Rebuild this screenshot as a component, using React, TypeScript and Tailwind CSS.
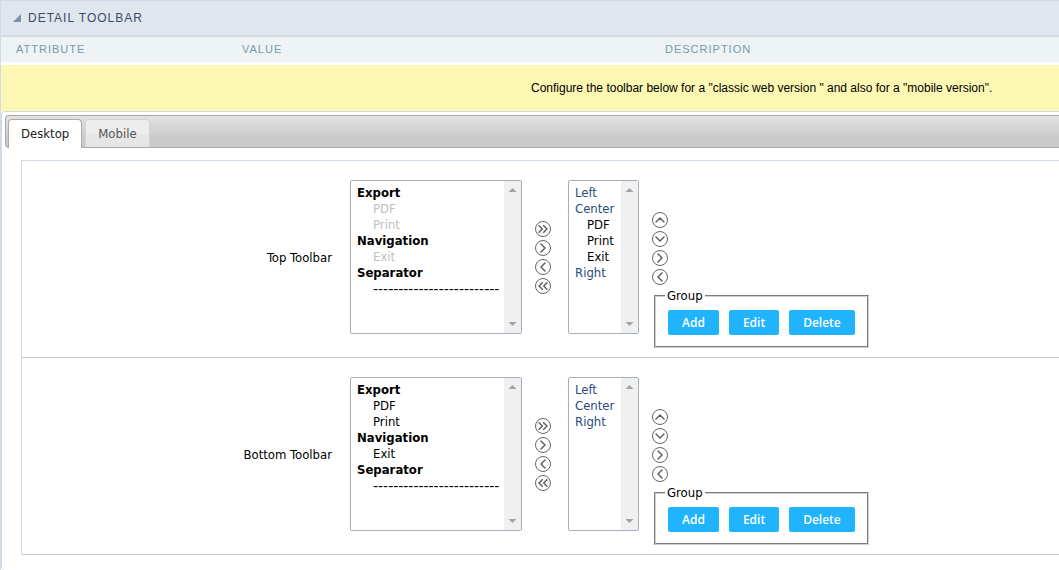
import { ChevronDown, ChevronLeft, ChevronRight, ChevronUp, ChevronsLeft, ChevronsRight, type LucideIcon } from "lucide-react";

type Item = { text: string; kind: "heading" | "disabled" | "item" | "region" | "button" | "divider" };
type Action = { label: string; icon: LucideIcon };

const DIVIDER = "-------------------------";

const optionStyle = {
  heading: "h-4 p-0 leading-4 font-bold text-black",
  disabled: "h-4 p-0 pl-4 leading-4 text-[#c0c0c0]",
  item: "h-4 p-0 pl-4 leading-4 text-black",
  divider: "h-4 p-0 pl-4 font-['DejaVu_Sans',sans-serif] text-[14px] leading-4 text-black",
  region: "h-4 p-0 leading-4 text-[#2b4a7a]",
  button: "h-4 p-0 pl-3 leading-4 text-black",
};

const moveActions: Action[] = [
  { label: "Add all", icon: ChevronsRight },
  { label: "Add selected", icon: ChevronRight },
  { label: "Remove selected", icon: ChevronLeft },
  { label: "Remove all", icon: ChevronsLeft },
];

const orderActions: Action[] = [
  { label: "Move up", icon: ChevronUp },
  { label: "Move down", icon: ChevronDown },
  { label: "Move right", icon: ChevronRight },
  { label: "Move left", icon: ChevronLeft },
];

function available(used: boolean): Item[] {
  const kind = used ? "disabled" : "item";
  return [
    { text: "Export", kind: "heading" },
    { text: "PDF", kind },
    { text: "Print", kind },
    { text: "Navigation", kind: "heading" },
    { text: "Exit", kind },
    { text: "Separator", kind: "heading" },
    { text: DIVIDER, kind: "divider" },
  ];
}

const topSelected: Item[] = [
  { text: "Left", kind: "region" },
  { text: "Center", kind: "region" },
  { text: "PDF", kind: "button" },
  { text: "Print", kind: "button" },
  { text: "Exit", kind: "button" },
  { text: "Right", kind: "region" },
];

const bottomSelected: Item[] = [
  { text: "Left", kind: "region" },
  { text: "Center", kind: "region" },
  { text: "Right", kind: "region" },
];

function ListBox({ id, label, items, width }: { id: string; label?: string; items: Item[]; width: string }) {
  return (
    <div className={`flex h-[154px] shrink-0 rounded-[2px] border border-[#a3afbf] bg-white ${width}`}>
      <select
        id={id}
        multiple
        aria-label={label}
        className="h-full min-w-0 flex-1 appearance-none overflow-hidden bg-transparent py-1 pl-[6px] text-[13px] outline-none"
      >
        {items.map((item) => (
          <option key={item.text} disabled={item.kind === "disabled"} className={optionStyle[item.kind]}>
            {item.text}
          </option>
        ))}
      </select>
      <div aria-hidden="true" className="flex w-[17px] flex-col items-center justify-between bg-[#f0f0f0] py-[7px]">
        <svg width="9" height="4" viewBox="0 0 9 4" fill="#a3a3a3"><path d="M.5 4 4.5 0 8.5 4z" /></svg>
        <svg width="9" height="4" viewBox="0 0 9 4" fill="#a3a3a3"><path d="M.5 0 4.5 4 8.5 0z" /></svg>
      </div>
    </div>
  );
}

function ActionColumn({ actions }: { actions: Action[] }) {
  return (
    <div className="flex flex-col gap-[3px]">
      {actions.map(({ label, icon: Icon }) => (
        <button
          key={label}
          type="button"
          aria-label={label}
          className="flex size-4 items-center justify-center rounded-full border border-[#666] bg-white text-[#606060]"
        >
          <Icon size={16} strokeWidth={2.25} className="shrink-0" />
        </button>
      ))}
    </div>
  );
}

function ToolbarRow({ id, label, source, selected }: { id: string; label: string; source: Item[]; selected: Item[] }) {
  return (
    <div className="flex items-start border-b border-[#c8c8c8] pt-[19px] pb-[9px]">
      <label htmlFor={id} className="w-[310px] shrink-0 pt-[70px] text-right leading-4">
        {label}
      </label>
      <div className="ml-[18px] flex">
        <ListBox id={id} items={source} width="w-[172px]" />
        <div className="mx-[13px] pt-[41px]">
          <ActionColumn actions={moveActions} />
        </div>
        <div className="ml-1">
          <ListBox id={`${id}-selected`} label={`${label} buttons in use`} items={selected} width="w-[71px]" />
        </div>
      </div>
      <div className="ml-[13px] pt-8">
        <ActionColumn actions={orderActions} />
        <fieldset className="mt-[3px] ml-[2px] border-2 border-[#d0d0d0] px-3 pb-[11px] [border-style:groove]">
          <legend className="-ml-[3px] px-[2px] leading-4">Group</legend>
          <div className="mt-[6px] flex gap-[10px] font-['Open_Sans',sans-serif] text-xs font-semibold text-white">
            <button type="button" className="h-[25px] rounded-[2px] bg-[#20b4ff] px-[14px]">Add</button>
            <button type="button" className="h-[25px] rounded-[2px] bg-[#20b4ff] px-[14px]">Edit</button>
            <button type="button" className="h-[25px] rounded-[2px] bg-[#20b4ff] px-[14px]">Delete</button>
          </div>
        </fieldset>
      </div>
    </div>
  );
}

export default function App() {
  return (
    <main className="min-h-screen overflow-hidden border-t border-l border-[#d0dbe3] bg-white font-['DejaVu_Sans_Condensed','Noto_Sans',sans-serif] text-[13px] text-black">
      <header className="flex h-9 items-center gap-[7px] border-b-2 border-[#d0dbe3] bg-[#dfe6ee] pl-3 font-['Liberation_Sans',sans-serif]">
        <svg width="8" height="8" viewBox="0 0 8 8" fill="#8291a8" aria-hidden="true"><path d="M8 0v8H0z" /></svg>
        <h1 className="text-xs tracking-[1px] text-[#3e4a63]">DETAIL TOOLBAR</h1>
      </header>
      <div className="grid h-[25px] grid-cols-[226px_423px_1fr] items-center bg-[#eef3f6] pl-[15px] font-['Liberation_Sans',sans-serif] text-[11px] tracking-[1px] text-[#7799a8]">
        <span>ATTRIBUTE</span>
        <span>VALUE</span>
        <span>DESCRIPTION</span>
      </div>
      <p className="mt-[3px] flex h-[46px] items-center bg-[#fcf8b3] pl-[530px] font-['Liberation_Sans',sans-serif] text-xs whitespace-nowrap">
        Configure the toolbar below for a "classic web version " and also for a "mobile version".
      </p>
      <section className="rounded-l-[4px] border-t border-l border-[#d0dbe3] pt-[3px] pb-[15px] pl-[3px]">
        <div role="tablist" className="flex h-[33px] items-end gap-[3px] rounded-l-[4px] border-y border-l border-[#aaa] bg-linear-to-b from-[#e3e3e3] to-[#cacaca] to-70% pl-[2px]">
          <button type="button" role="tab" aria-selected="true" className="-mb-px h-[29px] rounded-t-[4px] border border-b-0 border-[#aaa] bg-white px-3 text-[#212121]">
            Desktop
          </button>
          <button type="button" role="tab" aria-selected="false" className="h-[28px] rounded-t-[4px] border border-b-0 border-[#d3d3d3] bg-linear-to-b from-[#ededed] from-50% to-[#e6e6e6] to-50% px-3 text-[#555]">
            Mobile
          </button>
        </div>
        <div role="tabpanel" className="mt-3 ml-4 border-t border-l border-[#d0dbe3]">
          <ToolbarRow id="top-toolbar" label="Top Toolbar" source={available(true)} selected={topSelected} />
          <ToolbarRow id="bottom-toolbar" label="Bottom Toolbar" source={available(false)} selected={bottomSelected} />
        </div>
      </section>
    </main>
  );
}
